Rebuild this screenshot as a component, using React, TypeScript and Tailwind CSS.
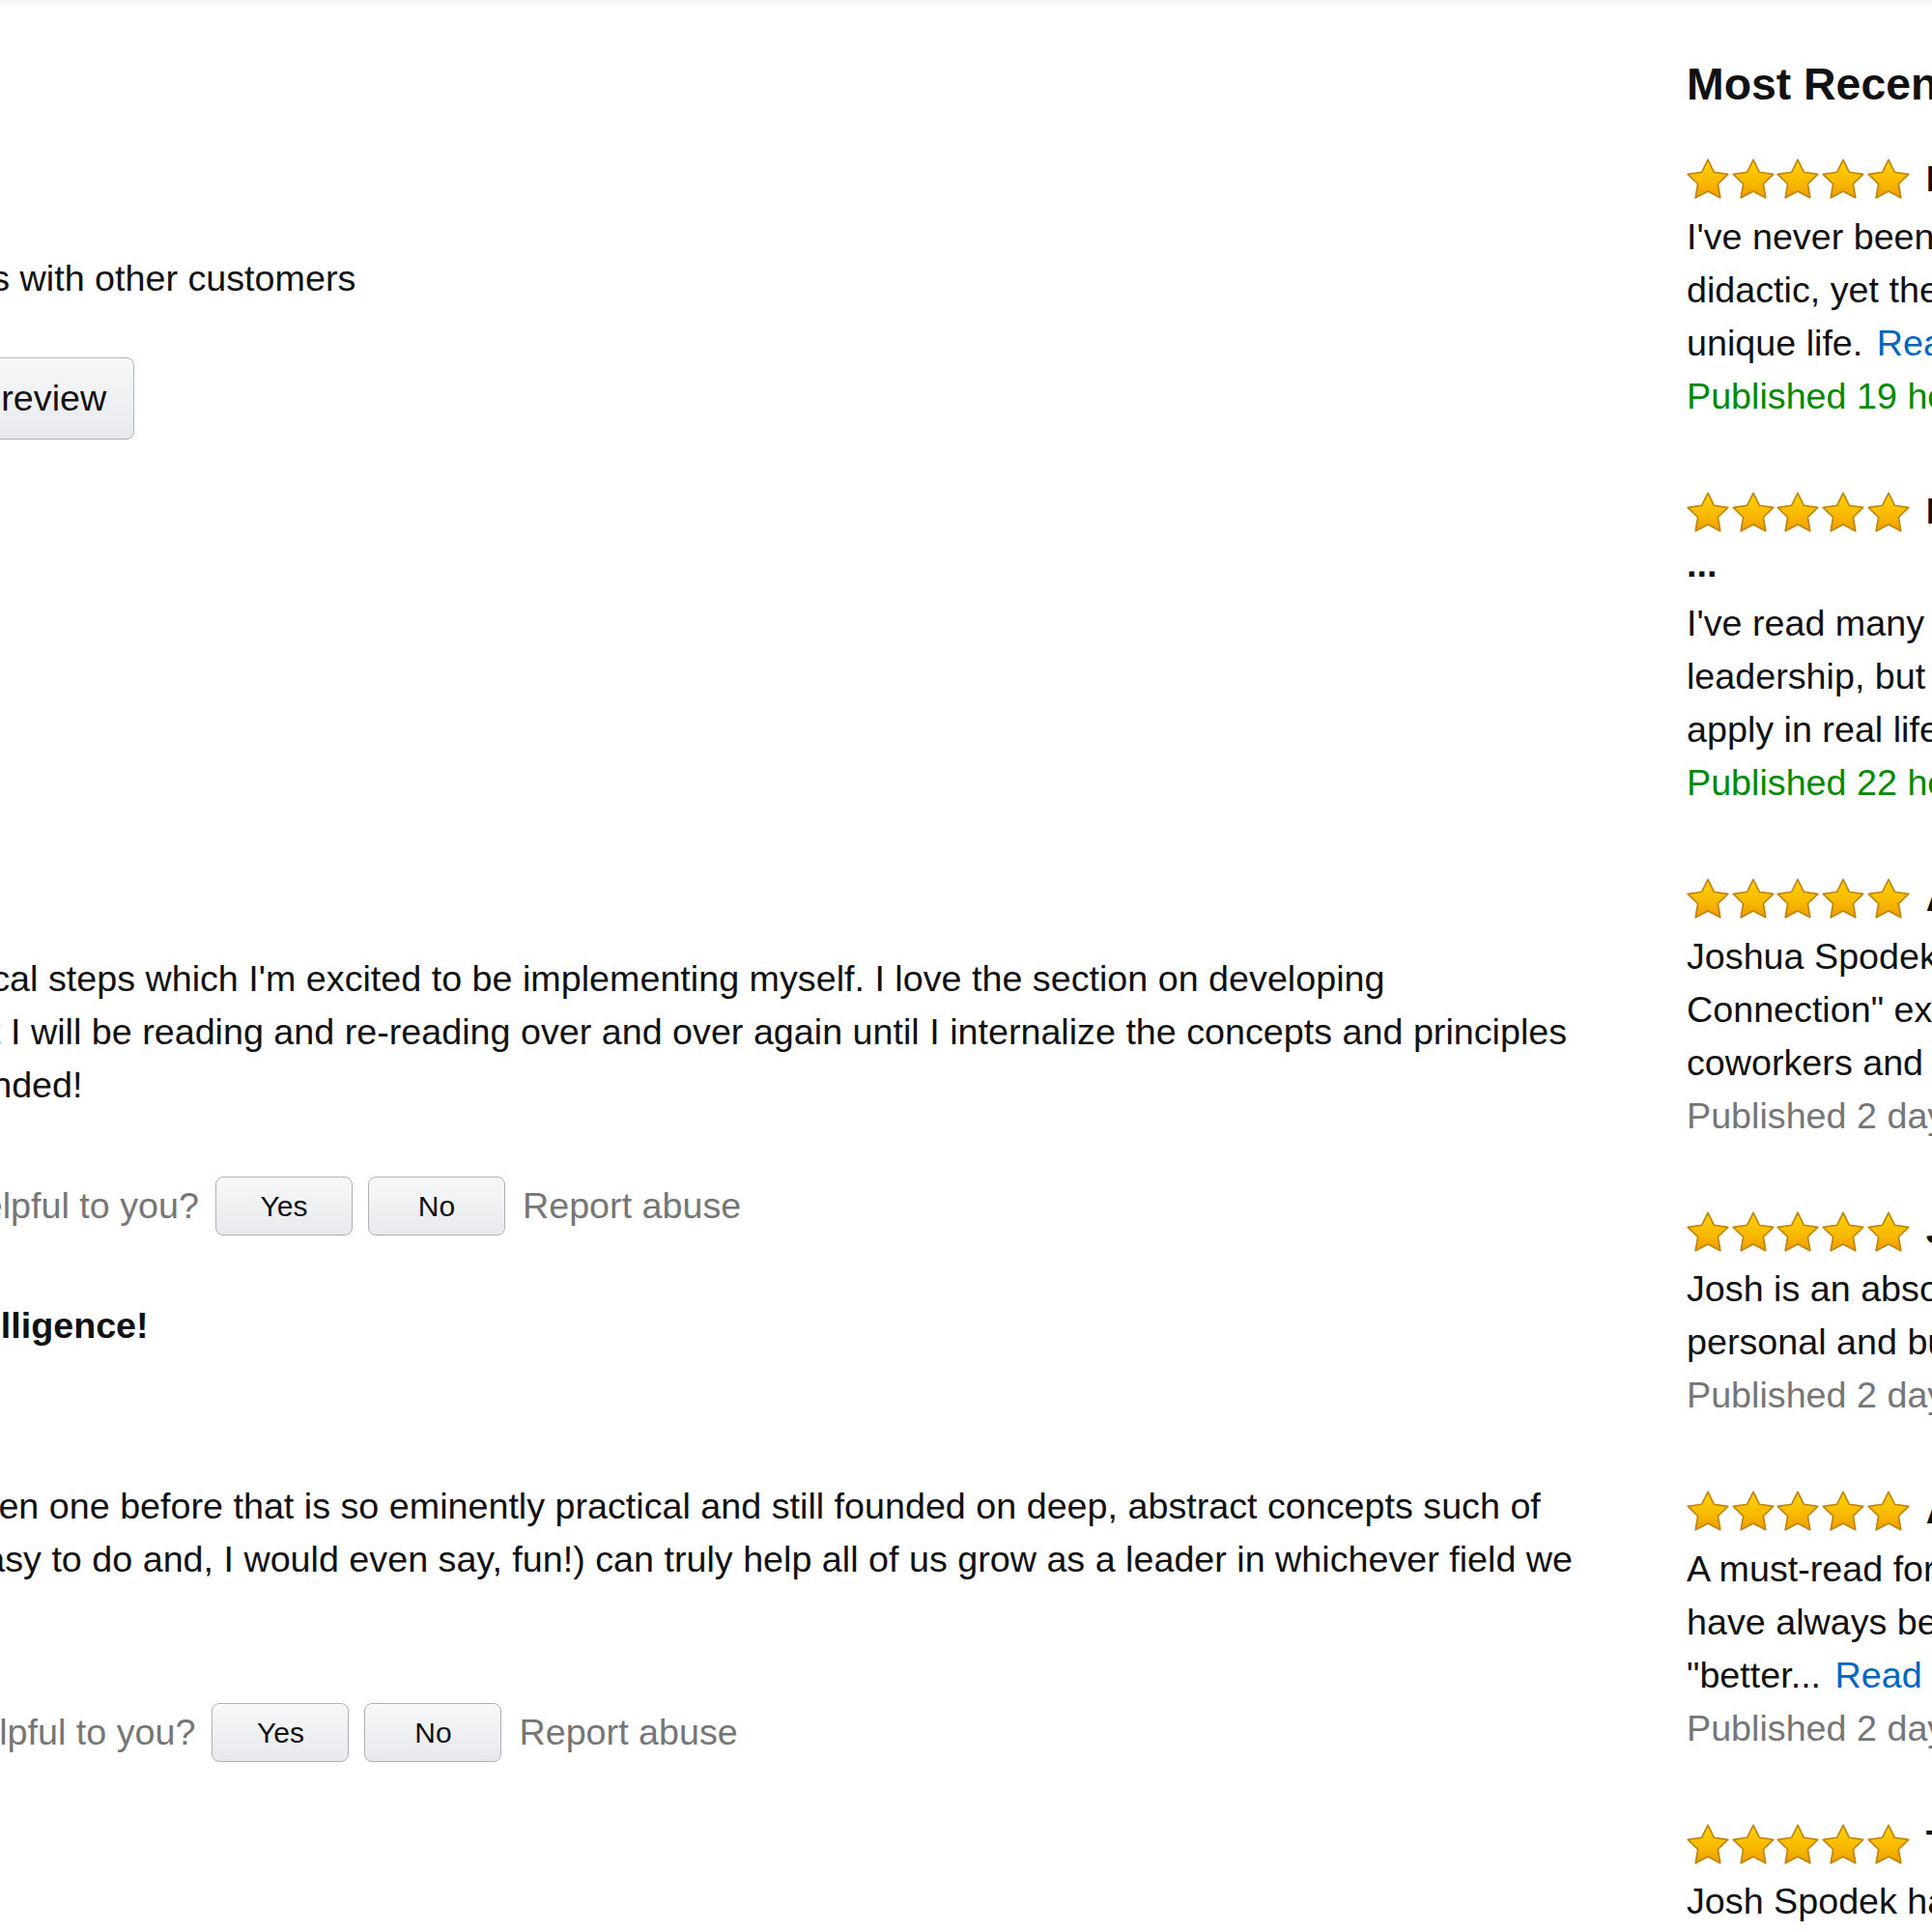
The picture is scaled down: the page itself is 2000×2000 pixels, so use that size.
import React from 'react';

const recentReviews = [
  {
    title: 'Inspiring, practical and honest',
    lines: ["I've never been a fan of leadership books that feel", 'didactic, yet the author draws lessons from his own'],
    tail: 'unique life.',
    published: 'Published 19 hours ago',
    fresh: true,
  },
  {
    title: 'Practical leadership advice you can actually use',
    wrap: '...',
    lines: ["I've read many books about management and", 'leadership, but this is the first one I could actually', 'apply in real life right away.'],
    published: 'Published 22 hours ago',
    fresh: true,
  },
  {
    title: 'A hands-on guide to leading people',
    lines: ["Joshua Spodek's exercises on \"Emotional", 'Connection" explore how to relate to your', 'coworkers and friends in a more genuine way.'],
    published: 'Published 2 days ago',
  },
  {
    title: 'Josh knows his stuff',
    lines: ['Josh is an absolute master at teaching leadership in', 'personal and business settings.'],
    published: 'Published 2 days ago',
  },
  {
    title: 'A must-read for aspiring leaders',
    lines: ['A must-read for anyone who wants to lead. I', 'have always been told to be a "leader" or'],
    tail: '"better...',
    published: 'Published 2 days ago',
  },
  {
    title: 'The best leadership book I have read',
    lines: ['Josh Spodek has written a truly practical guide', 'to becoming the person others follow.'],
    published: '',
  },
];

function Stars() {
  return (
    <div className="flex shrink-0 gap-[2.7px]">
      {[0, 1, 2, 3, 4].map((i) => (
        <svg key={i} width="44" height="42" viewBox="1.4 1.4 21.2 20.2">
          <path
            d="M12 2l3.09 6.26L22 9.27l-5 4.87 1.18 6.88L12 17.77l-6.18 3.25L7 14.14 2 9.27l6.91-1.01L12 2z"
            fill="url(#starFill)"
            stroke="#c0840c"
            strokeWidth="0.8"
            strokeLinejoin="round"
          />
        </svg>
      ))}
    </div>
  );
}

function VoteButton({ label }: { label: string }) {
  return (
    <button className="h-[61px] w-[142px] rounded-[8px] border border-[#adb1b8] bg-gradient-to-b from-[#f7f8fa] to-[#e7e9ec] text-[30px] text-[#111] shadow-[inset_0_1px_0_rgba(255,255,255,0.6)]">
      {label}
    </button>
  );
}

function HelpfulRow({ className = '' }: { className?: string }) {
  return (
    <div className={`flex h-[61px] items-center whitespace-nowrap ${className}`}>
      <span className="text-[#767676]">Was this review helpful to you?</span>
      <div className="ml-[17px] flex gap-[16px]">
        <VoteButton label="Yes" />
        <VoteButton label="No" />
      </div>
      <span className="ml-[18px] text-[#767676]">Report abuse</span>
    </div>
  );
}

export default function App() {
  return (
    <div className="h-[2000px] w-[2000px] overflow-hidden bg-white font-['Liberation_Sans',Arial,sans-serif] text-[37.7px] leading-[55px] text-[#111]">
      <svg className="absolute" width="0" height="0">
        <defs>
          <linearGradient id="starFill" x1="0" y1="0" x2="0" y2="1">
            <stop offset="0" stopColor="#ffd400" />
            <stop offset="0.6" stopColor="#f8b800" />
            <stop offset="1" stopColor="#ee9c00" />
          </linearGradient>
        </defs>
      </svg>

      <div className="h-[6px] bg-gradient-to-b from-[#f2f2f2] to-white" />

      <div className="flex">
        {/* Left: review summary + top reviews (scrolled partly out of view) */}
        <div className="-ml-[329.3px] w-[1975px] shrink-0">
          <p className="mt-[254.5px] whitespace-nowrap">Share your thoughts with other customers</p>
          <button className="ml-[7px] mt-[54.5px] h-[85px] rounded-[8px] border border-[#adb1b8] bg-gradient-to-b from-[#f7f8fa] to-[#e7e9ec] px-[28px] text-[#111] shadow-[inset_0_1px_0_rgba(255,255,255,0.6)]">
            Write a customer review
          </button>

          <div className="pl-[14.7px]">
            <p className="mt-[530.5px] whitespace-nowrap">
              Loaded with practical steps which I'm excited to be implementing myself. I love the section on developing
              <br />
              habits. It's one that I will be reading and re-reading over and over again until I internalize the concepts and principles
              <br />
              Strongly recommended!
            </p>
            <HelpfulRow className="ml-[2.5px] mt-[67.5px]" />

            <div className="mt-[65.5px] flex h-[55px] items-center whitespace-nowrap">
              <Stars />
              <span className="ml-[17.6px] font-bold">Intelligence!</span>
            </div>
            <p className="mt-[132px] whitespace-nowrap">
              I've never really seen one before that is so eminently practical and still founded on deep, abstract concepts such of
              <br />
              love. The steps (easy to do and, I would even say, fun!) can truly help all of us grow as a leader in whichever field we
              <br />
              are in.
            </p>
            <HelpfulRow className="-ml-[1px] mt-[66.5px]" />
          </div>
        </div>

        {/* Right: most recent reviews sidebar */}
        <div className="ml-[100.3px] w-[700px] shrink-0">
          <h3 className="mt-[53.5px] whitespace-nowrap text-[46.4px] font-bold leading-[55px]">Most Recent Customer Reviews</h3>
          <div className="mt-[43px]">
            {recentReviews.map((r, idx) => (
              <div key={idx} className="mb-[64.5px]">
                <div className="flex h-[55px] items-center whitespace-nowrap">
                  <Stars />
                  <span className="ml-[17px] font-bold">{r.title}</span>
                </div>
                {r.wrap && <p className="font-bold">{r.wrap}</p>}
                <p className={`whitespace-nowrap ${r.wrap ? 'mt-[6px]' : 'mt-[5px]'}`}>
                  {r.lines.map((line, i) => (
                    <React.Fragment key={i}>
                      {line}
                      <br />
                    </React.Fragment>
                  ))}
                  {r.tail && (
                    <>
                      {r.tail}{' '}
                      <a className="ml-[4px] text-[#0066c0]">Read more</a>
                    </>
                  )}
                </p>
                {r.published && (
                  <p className={`whitespace-nowrap ${r.fresh ? 'text-[#008a00]' : 'text-[#767676]'}`}>{r.published}</p>
                )}
              </div>
            ))}
          </div>
        </div>
      </div>
    </div>
  );
}
